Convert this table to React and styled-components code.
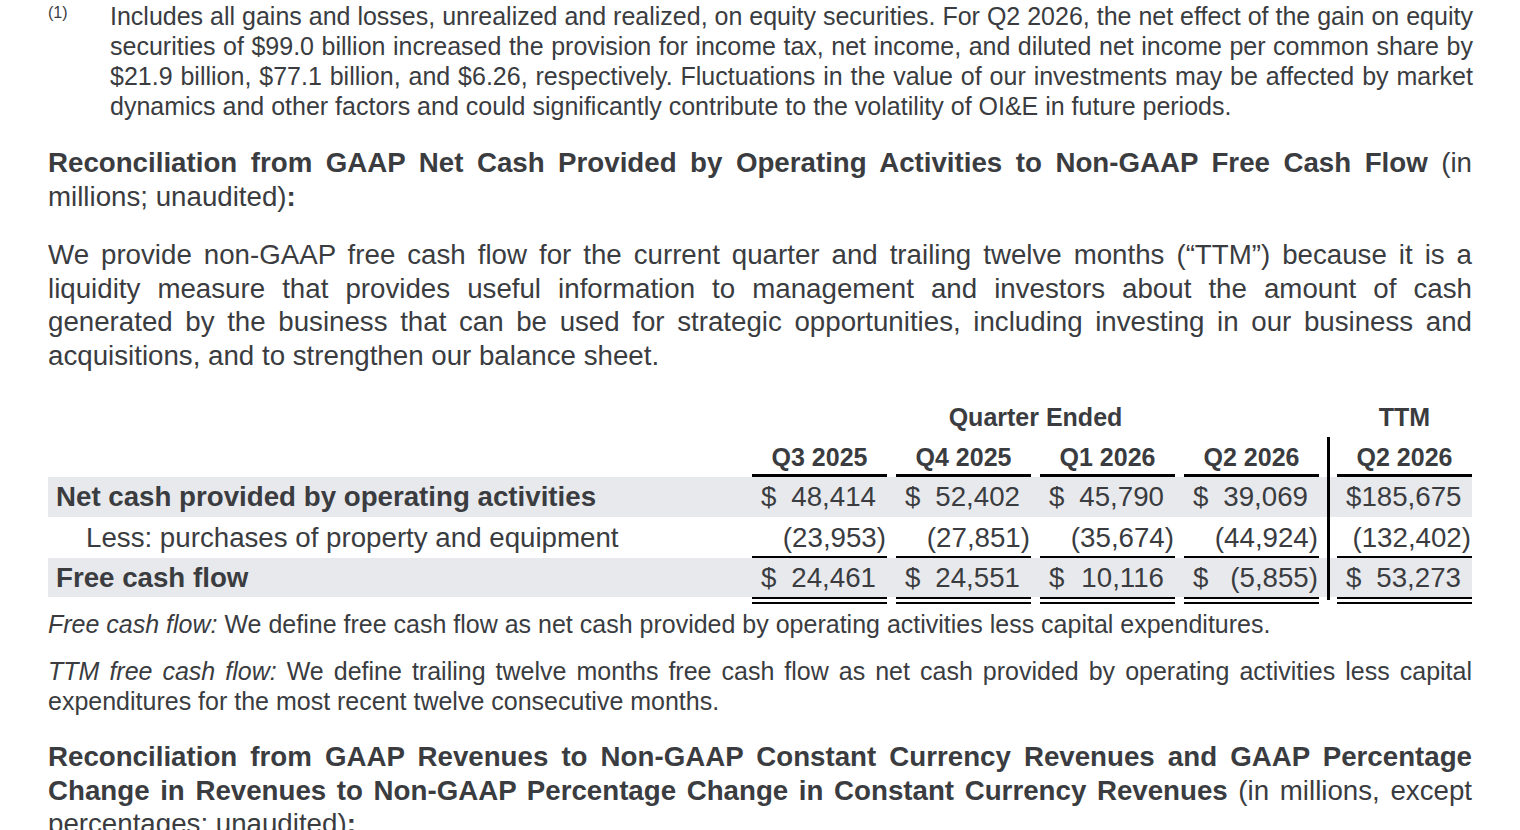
import React from 'react'
import styled, { createGlobalStyle } from 'styled-components'

const GlobalStyle = createGlobalStyle`
  html, body {
    margin: 0;
    padding: 0;
    background: #fff;
  }
  body {
    font-family: "Liberation Sans", Arial, sans-serif;
    color: #3a3c3f;
  }
`

const Page = styled.div`
  padding: 1px 48px 0 48px;
  display: flex;
  flex-direction: column;
`

const Footnote = styled.div`
  display: flex;
  font-size: 25px;
  line-height: 30px;
`

const Marker = styled.span`
  flex: 0 0 62px;
  font-size: 16px;
  line-height: 24px;
`

const Block = styled.div`
  flex: 1;
  margin-top: ${p => p.$top || 0}px;
  font-size: ${p => p.$size || 25}px;
  line-height: ${p => p.$lh || 30}px;
`

const Line = styled.span`
  display: block;
  white-space: nowrap;
  text-align: justify;
  text-align-last: ${p => (p.$last ? 'left' : 'justify')};
`

const B = styled.b`
  font-weight: 700;
`

const I = styled.i`
  font-style: italic;
`

/* table */
const Table = styled.div`
  margin-top: 25px;
  display: flex;
  flex-direction: column;
`

const Row = styled.div`
  display: grid;
  grid-template-columns: 1fr repeat(4, 135px) 0px 135px;
  column-gap: 9px;
  height: ${p => p.$h || 40}px;
  background: ${p => (p.$shade ? '#e8e9ed' : 'transparent')};
`

const GroupHead = styled.div`
  grid-column: ${p => p.$span};
  display: flex;
  align-items: center;
  justify-content: center;
  font-size: 25px;
  font-weight: 700;
`

const ColHead = styled.div`
  display: flex;
  align-items: center;
  justify-content: center;
  font-size: 25px;
  font-weight: 700;
  border-bottom: 3px solid #000;
  padding-top: 3px;
`

const Label = styled.div`
  display: flex;
  align-items: center;
  padding-left: ${p => (p.$indent ? 38 : 8)}px;
  font-size: 27.7px;
  font-weight: ${p => (p.$bold ? 700 : 400)};
  white-space: nowrap;
`

const Value = styled.div`
  display: flex;
  align-items: center;
  font-size: 27.7px;
  border-bottom: ${p => (p.$rule ? '2px solid #000' : 'none')};
  padding-top: ${p => (p.$rule ? 2 : 0)}px;
`

const Cur = styled.span`
  padding-left: 9px;
`

const Num = styled.span`
  margin-left: auto;
  padding-right: ${p => (p.$neg ? 1 : 11)}px;
`

const Sep = styled.div`
  position: relative;
  &::before {
    content: "";
    position: absolute;
    left: -1.5px;
    top: 0;
    width: 3px;
    height: ${p => p.$len || '100%'};
    background: #000;
  }
`

const Double = styled.div`
  border-top: 2px solid #000;
  border-bottom: 2px solid #000;
  height: 3px;
`

const Amount = ({ cur, value, neg, rule }) => (
  <Value $rule={rule}>
    {cur && <Cur>$</Cur>}
    <Num $neg={neg}>{value}</Num>
  </Value>
)

const rows = [
  {
    label: 'Net cash provided by operating activities',
    bold: true,
    shade: true,
    h: 40,
    vals: [['48,414'], ['52,402'], ['45,790'], ['39,069']],
    ttm: ['185,675'],
    cur: true,
  },
  {
    label: 'Less: purchases of property and equipment',
    indent: true,
    h: 41,
    rule: true,
    vals: [['(23,953)', true], ['(27,851)', true], ['(35,674)', true], ['(44,924)', true]],
    ttm: ['(132,402)', true],
  },
  {
    label: 'Free cash flow',
    bold: true,
    shade: true,
    h: 39,
    vals: [['24,461'], ['24,551'], ['10,116'], ['(5,855)', true]],
    ttm: ['53,273'],
    cur: true,
  },
]

const CashTable = () => (
  <Table>
    <Row>
      <div />
      <GroupHead $span="2 / 6">Quarter Ended</GroupHead>
      <GroupHead $span="7 / 8">TTM</GroupHead>
    </Row>
    <Row>
      <div />
      <ColHead>Q3 2025</ColHead>
      <ColHead>Q4 2025</ColHead>
      <ColHead>Q1 2026</ColHead>
      <ColHead>Q2 2026</ColHead>
      <Sep />
      <ColHead>Q2 2026</ColHead>
    </Row>
    {rows.map(r => (
      <Row key={r.label} $shade={r.shade} $h={r.h}>
        <Label $bold={r.bold} $indent={r.indent}>{r.label}</Label>
        {r.vals.map(([v, neg], i) => (
          <Amount key={i} cur={r.cur} value={v} neg={neg} rule={r.rule} />
        ))}
        <Sep />
        <Amount cur={r.cur} value={r.ttm[0]} neg={r.ttm[1]} rule={r.rule} />
      </Row>
    ))}
    <Row $h={7}>
      <div />
      <Double />
      <Double />
      <Double />
      <Double />
      <Sep $len="3px" />
      <Double />
    </Row>
  </Table>
)

export default function App() {
  return (
    <>
      <GlobalStyle />
      <Page>
        <Footnote>
          <Marker>(1)</Marker>
          <Block>
            <Line>Includes all gains and losses, unrealized and realized, on equity securities. For Q2 2026, the net effect of the gain on equity</Line>
            <Line>securities of $99.0 billion increased the provision for income tax, net income, and diluted net income per common share by</Line>
            <Line>$21.9 billion, $77.1 billion, and $6.26, respectively. Fluctuations in the value of our investments may be affected by market</Line>
            <Line $last>dynamics and other factors and could significantly contribute to the volatility of OI&amp;E in future periods.</Line>
          </Block>
        </Footnote>

        <Block $top={25} $size={27.7} $lh={33.5}>
          <Line><B>Reconciliation from GAAP Net Cash Provided by Operating Activities to Non-GAAP Free Cash Flow</B> (in</Line>
          <Line $last>millions; unaudited)<B>:</B></Line>
        </Block>

        <Block $top={25} $size={27.7} $lh={33.5}>
          <Line>We provide non-GAAP free cash flow for the current quarter and trailing twelve months (“TTM”) because it is a</Line>
          <Line>liquidity measure that provides useful information to management and investors about the amount of cash</Line>
          <Line>generated by the business that can be used for strategic opportunities, including investing in our business and</Line>
          <Line $last>acquisitions, and to strengthen our balance sheet.</Line>
        </Block>

        <CashTable />

        <Block $top={5}>
          <Line $last><I>Free cash flow:</I> We define free cash flow as net cash provided by operating activities less capital expenditures.</Line>
        </Block>

        <Block $top={17}>
          <Line><I>TTM free cash flow:</I> We define trailing twelve months free cash flow as net cash provided by operating activities less capital</Line>
          <Line $last>expenditures for the most recent twelve consecutive months.</Line>
        </Block>

        <Block $top={24} $size={27.7} $lh={33.5}>
          <Line><B>Reconciliation from GAAP Revenues to Non-GAAP Constant Currency Revenues and GAAP Percentage</B></Line>
          <Line><B>Change in Revenues to Non-GAAP Percentage Change in Constant Currency Revenues</B> (in millions, except</Line>
          <Line $last>percentages; unaudited)<B>:</B></Line>
        </Block>
      </Page>
    </>
  )
}
